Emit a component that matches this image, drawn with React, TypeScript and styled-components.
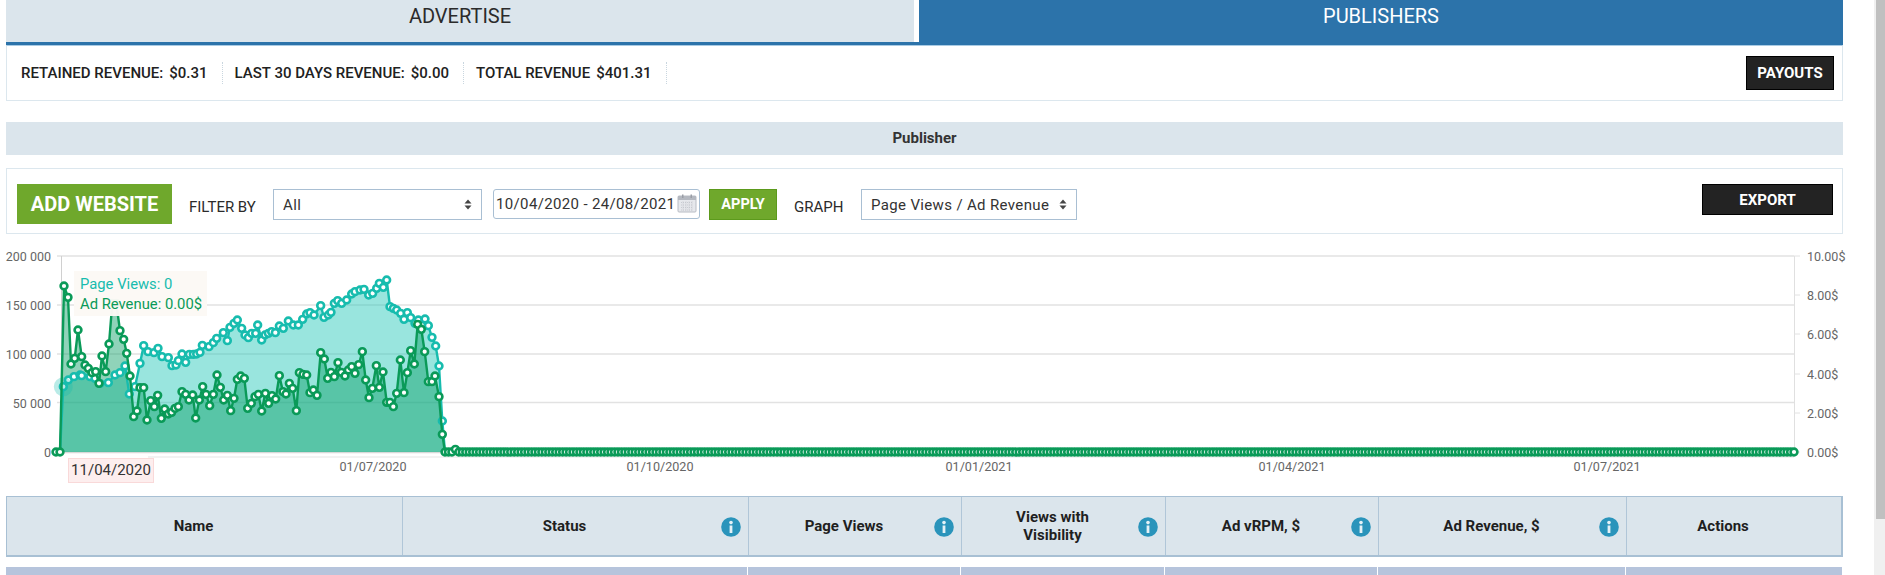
import React from "react";
import styled, { createGlobalStyle } from "styled-components";

const Global = createGlobalStyle`
  html, body { margin: 0; padding: 0; height: 100%; overflow: hidden; background: #fff; }
  body { font-family: Roboto, "Liberation Sans", sans-serif; color: #212121; }
  * { box-sizing: border-box; }
`;

const Shell = styled.div`
  display: flex;
  height: 575px;
  overflow: hidden;
`;
const Main = styled.main`
  flex: 1;
  min-width: 0;
  padding: 0 31px 0 6px;
`;
const Track = styled.div`
  width: 11px;
  padding-left: 2px;
  background: #f0f0f0;
`;
const Thumb = styled.div`
  height: 519px;
  background: #c0c0c0;
`;
const Tabs = styled.nav`
  display: flex;
  gap: 5px;
  height: 45px;
  border-bottom: 3px solid #2c73aa;
`;
const Tab = styled.div<{ $active?: boolean }>`
  flex: ${(p) => (p.$active ? "1" : "0 0 908px")};
  height: ${(p) => (p.$active ? "45px" : "42px")};
  padding-top: 3px;
  line-height: 26px;
  font-size: 20px;
  text-align: center;
  background: ${(p) => (p.$active ? "#2c73aa" : "#dbe5ec")};
  color: ${(p) => (p.$active ? "#fff" : "#2b2b2b")};
`;
const RevenueCard = styled.section`
  display: flex;
  align-items: center;
  height: 56px;
  padding: 0 8px 0 14px;
  border: 1px solid #dce7ee;
  border-top-color: #a9cbe4;
`;
const Stat = styled.div`
  display: flex;
  align-items: center;
  gap: 6px;
  height: 22px;
  padding-right: 14px;
  margin-right: 12px;
  border-right: 1px dotted #c9d6df;
  font-size: 15px;
  font-weight: 500;
  color: #212121;
`;
const DarkButton = styled.button<{ $w: number; $h: number }>`
  width: ${(p) => p.$w}px;
  height: ${(p) => p.$h}px;
  margin-left: auto;
  padding: 0;
  background: #232323;
  border: 1px solid #000;
  color: #fff;
  font: 700 15px Roboto, sans-serif;
`;
const SectionBar = styled.div`
  margin-top: 21px;
  height: 33px;
  line-height: 33px;
  background: #dbe5ec;
  text-align: center;
  font-size: 15px;
  font-weight: 700;
  color: #333;
`;
const FilterCard = styled.section`
  display: flex;
  align-items: flex-start;
  margin-top: 13px;
  height: 66px;
  padding: 15px 9px 0 10px;
  border: 1px solid #dce7ee;
`;
const AddButton = styled.button`
  width: 155px;
  height: 40px;
  padding: 0;
  background: #6fa82c;
  border: 0;
  color: #fff;
  font: 700 20px Roboto, sans-serif;
`;
const FieldLabel = styled.span<{ $left: number; $w: number }>`
  margin: 5px 0 0 ${(p) => p.$left}px;
  width: ${(p) => p.$w}px;
  line-height: 36px;
  font-size: 15px;
  color: #2b2b2b;
  white-space: nowrap;
`;
const SelectWrap = styled.div<{ $w: number }>`
  position: relative;
  width: ${(p) => p.$w}px;
  height: 31px;
  margin-top: 5px;
`;
const NativeSelect = styled.select`
  appearance: none;
  width: 100%;
  height: 100%;
  padding: 0 20px 0 9px;
  background: #fff;
  border: 1px solid #a9bfd3;
  border-radius: 0;
  font: 400 15px Roboto, sans-serif;
  letter-spacing: 0.35px;
  color: #333;
`;
const UpDown = styled.svg`
  position: absolute;
  right: 10px;
  top: 10px;
  pointer-events: none;
`;
const DateField = styled.div`
  position: relative;
  width: 207px;
  height: 30px;
  margin: 5px 0 0 11px;
`;
const DateInput = styled.input`
  width: 100%;
  height: 100%;
  padding: 0 26px 0 2px;
  border: 1px solid #a9bfd3;
  border-radius: 3px;
  background: #fff;
  font: 400 15px Roboto, sans-serif;
  letter-spacing: 0.35px;
  color: #333;
`;
const CalendarIcon = styled.svg`
  position: absolute;
  right: 3px;
  top: 5px;
`;
const ApplyButton = styled.button`
  width: 68px;
  height: 31px;
  margin: 5px 0 0 9px;
  padding: 0;
  background: #6fa82c;
  border: 1px solid #5c9a1c;
  color: #fff;
  font: 700 14.5px Roboto, sans-serif;
`;
const ChartWrap = styled.section`
  position: relative;
  height: 262px;
`;
const ChartSvg = styled.svg`
  display: block;
  overflow: visible;
  font-family: Roboto, sans-serif;
`;
const ChartTip = styled.div`
  position: absolute;
  left: 68px;
  top: 37px;
  width: 133px;
  height: 45px;
  padding: 3px 0 0 6px;
  background: rgba(252, 249, 245, 0.97);
  font-size: 14.8px;
  line-height: 20px;
  white-space: nowrap;
`;
const TipLine = styled.div<{ $c: string }>`
  color: ${(p) => p.$c};
`;
const DateMark = styled.div`
  position: absolute;
  left: 62px;
  top: 224px;
  width: 86px;
  height: 25px;
  line-height: 23px;
  background: #fdeeee;
  border: 1px solid #f9d9d9;
  text-align: center;
  font-size: 15px;
  color: #333;
`;
const COLUMNS = "396px 346px 213px 204px 213px 248px 1fr";
const HeadRow = styled.div`
  display: grid;
  grid-template-columns: ${COLUMNS};
  height: 61px;
  border: 2px solid #a8c0d4;
  border-width: 1px 2px 2px 1px;
  background: #dbe5ec;
`;
const HeadCell = styled.div`
  position: relative;
  display: flex;
  align-items: center;
  justify-content: center;
  padding: 0 24px 0 2px;
  border-right: 1px solid #b0c6d8;
  font-size: 15px;
  font-weight: 700;
  line-height: 18px;
  text-align: center;
  color: #1f1f1f;
  &:last-child { border-right: 0; }
`;
const InfoIcon = styled.svg`
  position: absolute;
  right: 7px;
  top: 20px;
`;
const BodyRow = styled.div`
  display: grid;
  grid-template-columns: ${COLUMNS};
  gap: 0;
  margin-top: 10px;
  height: 8px;
  padding-right: 1px;
`;
const BodyCell = styled.div<{ $span?: number }>`
  grid-column: span ${(p) => p.$span ?? 1};
  background: #b6c4dc;
  border-right: 1px solid #fff;
  &:last-child { border-right: 0; }
`;

const TEAL = "#17bcae";
const GREEN = "#0a9a58";

const tealRaw: [number, number][] = [
  [168,636],[180,636],[190,440],[205,420],[222,410],[240,405],[245,407],[270,410],[285,415],[300,430],[325,428],[345,405],[360,398],[375,378],[388,462],[405,440],[420,370],[431,317],[444,335],[462,338],[474,325],[486,350],[505,353],[516,377],[528,375],[535,362],[546,342],[557,367],[568,343],[580,343],[590,342],[600,337],[607,316],[627,320],[640,308],[650,295],[670,278],[682,302],[690,262],[702,250],[712,240],[725,265],[735,285],[745,293],[755,280],[767,280],[773,255],[785,300],[795,285],[805,280],[815,275],[826,278],[838,258],[850,265],[865,243],[880,255],[895,255],[908,238],[920,222],[930,218],[942,225],[962,197],[972,232],[985,225],[993,217],[1003,190],[1013,182],[1025,190],[1040,180],[1055,162],[1065,155],[1080,150],[1092,148],[1106,165],[1118,160],[1130,145],[1138,130],[1150,142],[1160,120],[1170,200],[1180,205],[1190,210],[1202,220],[1212,238],[1222,218],[1232,233],[1245,250],[1255,240],[1265,255],[1275,237],[1285,257],[1296,292],[1307,318],[1317,378],[1327,543],
];
const greenRaw: [number, number][] = [
  [168,636],[180,636],[192,138],[204,172],[213,372],[224,355],[234,270],[245,350],[255,375],[265,385],[276,398],[287,395],[297,430],[306,348],[317,395],[327,312],[337,190],[349,190],[360,272],[371,298],[380,340],[390,408],[401,530],[411,513],[420,443],[431,443],[441,540],[452,482],[463,500],[473,466],[484,535],[494,507],[505,522],[515,517],[525,505],[535,500],[546,455],[557,463],[567,480],[578,465],[587,534],[598,480],[608,440],[618,463],[629,497],[640,463],[651,405],[661,442],[671,480],[682,466],[692,512],[702,475],[712,418],[722,408],[733,415],[743,505],[754,490],[765,470],[775,463],[785,513],[796,460],[806,490],[816,467],[827,477],[838,407],[849,455],[858,462],[868,430],[878,445],[889,512],[898,398],[909,403],[920,405],[930,458],[940,450],[951,466],[962,338],[973,357],[983,415],[993,397],[1003,410],[1014,368],[1024,397],[1035,408],[1045,390],[1055,380],[1065,400],[1076,374],[1087,335],[1097,420],[1107,473],[1117,445],[1129,377],[1138,442],[1149,396],[1160,487],[1170,487],[1180,500],[1190,460],[1201,360],[1212,458],[1222,398],[1232,332],[1243,372],[1253,253],[1264,268],[1274,335],[1285,425],[1296,425],[1305,408],[1317,470],[1327,583],
];

const tail: [number, number][] = [];
for (let x = 1335; x <= 5382; x += (5382 - 1335) / 390) {
  tail.push([x, tail.length === 3 ? 628 : 636]);
}
const toPage = (pts: [number, number][]) => pts.map(([x, y]) => [x / 3, y / 3 + 240] as [number, number]);
const teal = toPage([...tealRaw, ...tail]);
const green = toPage([...greenRaw, ...tail]);
const line = (p: [number, number][]) => p.map(([x, y]) => `${x.toFixed(1)},${y.toFixed(1)}`).join(" ");
const area = (p: [number, number][]) => `${p[0][0]},452 ${line(p)} ${p[p.length - 1][0]},452`;

const leftLabels: [string, number][] = [["200 000", 256], ["150 000", 305], ["100 000", 354], ["50 000", 403], ["0", 452]];
const rightLabels: [string, number][] = [["10.00$", 256], ["8.00$", 295], ["6.00$", 334], ["4.00$", 374], ["2.00$", 413], ["0.00$", 452]];
const dateLabels: [string, number][] = [["01/07/2020", 373], ["01/10/2020", 660], ["01/01/2021", 979], ["01/04/2021", 1292], ["01/07/2021", 1607]];

function Chart() {
  return (
    <ChartSvg width={1837} height={262} viewBox="6 234 1837 262">
      {[256, 305, 354, 402.5].map((y) => (
        <line key={y} x1={57} x2={1794} y1={y} y2={y} stroke="#e2e2e2" strokeWidth={1.3} />
      ))}
      <line x1={61.5} x2={61.5} y1={256} y2={452} stroke="#d0d0d0" />
      <line x1={1794.5} x2={1794.5} y1={256} y2={452} stroke="#e0e0e0" />
      <line x1={57} x2={1794} y1={452.5} y2={452.5} stroke="#d8d8d8" strokeWidth={1.3} />
      <line x1={148} x2={1794} y1={457} y2={457} stroke="#000" strokeOpacity={0.1} />
      {rightLabels.map(([, y]) => (
        <line key={y} x1={1794} x2={1800} y1={y} y2={y} stroke="#e2e2e2" />
      ))}
      {leftLabels.map(([t, y]) => (
        <text key={t} x={51} y={y + 4.5} textAnchor="end" fontSize={12.5} fill="#666">{t}</text>
      ))}
      {rightLabels.map(([t, y]) => (
        <text key={t} x={1807} y={y + 4.5} fontSize={12.5} fill="#666">{t}</text>
      ))}
      {dateLabels.map(([t, x]) => (
        <text key={t} x={x} y={470.5} textAnchor="middle" fontSize={12.6} fill="#666">{t}</text>
      ))}
      <polygon points={area(teal.slice(1, 96))} fill="#16c4b4" opacity={0.44} />
      <polygon points={area(green.slice(1, 114))} fill="#089e64" opacity={0.45} />
      <polyline points={line(teal.slice(0, 97))} fill="none" stroke={TEAL} strokeWidth={2.4} />
      {teal.slice(2, 95).map(([x, y], i) => (
        <circle key={i} cx={x} cy={y} r={3.4} fill="#fff" stroke={TEAL} strokeWidth={2.6} />
      ))}
      <circle cx={63.3} cy={386.7} r={9.5} fill={TEAL} opacity={0.3} />
      <polyline points={line(green)} fill="none" stroke={GREEN} strokeWidth={2.4} />
      {green.map(([x, y], i) => (
        <circle key={i} cx={x} cy={y} r={3.4} fill="#fff" stroke={GREEN} strokeWidth={2.6} />
      ))}
    </ChartSvg>
  );
}

const Info = () => (
  <InfoIcon width={20} height={20} viewBox="0 0 20 20" aria-hidden>
    <circle cx={10} cy={10} r={9.8} fill="#2a94bb" />
    <circle cx={10} cy={5.6} r={1.8} fill="#e4f1f6" />
    <path d="M8.6 8.5h2.8v7.5H8.6z" fill="#e4f1f6" />
  </InfoIcon>
);

const Calendar = () => (
  <CalendarIcon width={20} height={19} viewBox="0 0 20 19" aria-hidden>
    <rect x={1} y={2} width={18} height={16} rx={1} fill="#e6e8ec" stroke="#b8bcc4" />
    <rect x={1} y={2} width={18} height={4} fill="#b4b8c0" />
    <rect x={5} y={0.5} width={1.5} height={3.5} fill="#9a9ea6" />
    <rect x={13.5} y={0.5} width={1.5} height={3.5} fill="#9a9ea6" />
    <path d="M4 8.5h12M4 11h12M4 13.5h12M4 16h12M6 7.5v9.5M9 7.5v9.5M12 7.5v9.5M15 7.5v9.5" stroke="#bfc3ca" strokeWidth={0.8} strokeDasharray="1 1" />
  </CalendarIcon>
);

const Arrows = () => (
  <UpDown width={8} height={11} viewBox="0 0 8 11" aria-hidden>
    <path d="M4 0.5 7.5 4.5H.5zM4 10.5.5 6.5h7z" fill="#444" />
  </UpDown>
);

export default function App() {
  return (
    <Shell>
      <Global />
      <Main>
        <Tabs>
          <Tab>ADVERTISE</Tab>
          <Tab $active>PUBLISHERS</Tab>
        </Tabs>
        <RevenueCard>
          <Stat><span>RETAINED REVENUE:</span><span>$0.31</span></Stat>
          <Stat><span>LAST 30 DAYS REVENUE:</span><span>$0.00</span></Stat>
          <Stat><span>TOTAL REVENUE</span><span>$401.31</span></Stat>
          <DarkButton $w={88} $h={34}>PAYOUTS</DarkButton>
        </RevenueCard>
        <SectionBar>Publisher</SectionBar>
        <FilterCard>
          <AddButton>ADD WEBSITE</AddButton>
          <FieldLabel $left={17} $w={84}>FILTER BY</FieldLabel>
          <SelectWrap $w={209}>
            <NativeSelect defaultValue="All">
              <option>All</option>
            </NativeSelect>
            <Arrows />
          </SelectWrap>
          <DateField>
            <DateInput readOnly value="10/04/2020 - 24/08/2021" />
            <Calendar />
          </DateField>
          <ApplyButton>APPLY</ApplyButton>
          <FieldLabel $left={17} $w={67}>GRAPH</FieldLabel>
          <SelectWrap $w={216}>
            <NativeSelect defaultValue="Page Views / Ad Revenue">
              <option>Page Views / Ad Revenue</option>
            </NativeSelect>
            <Arrows />
          </SelectWrap>
          <DarkButton $w={131} $h={31}>EXPORT</DarkButton>
        </FilterCard>
        <ChartWrap>
          <Chart />
          <ChartTip>
            <TipLine $c="#17bcae">Page Views: 0</TipLine>
            <TipLine $c="#0a9a58">Ad Revenue: 0.00$</TipLine>
          </ChartTip>
          <DateMark>11/04/2020</DateMark>
        </ChartWrap>
        <HeadRow>
          <HeadCell>Name</HeadCell>
          <HeadCell>Status<Info /></HeadCell>
          <HeadCell>Page Views<Info /></HeadCell>
          <HeadCell>Views with<br />Visibility<Info /></HeadCell>
          <HeadCell>Ad vRPM, $<Info /></HeadCell>
          <HeadCell>Ad Revenue, $<Info /></HeadCell>
          <HeadCell>Actions</HeadCell>
        </HeadRow>
        <BodyRow>
          <BodyCell $span={2} />
          <BodyCell />
          <BodyCell />
          <BodyCell />
          <BodyCell />
          <BodyCell />
        </BodyRow>
      </Main>
      <Track><Thumb /></Track>
    </Shell>
  );
}
